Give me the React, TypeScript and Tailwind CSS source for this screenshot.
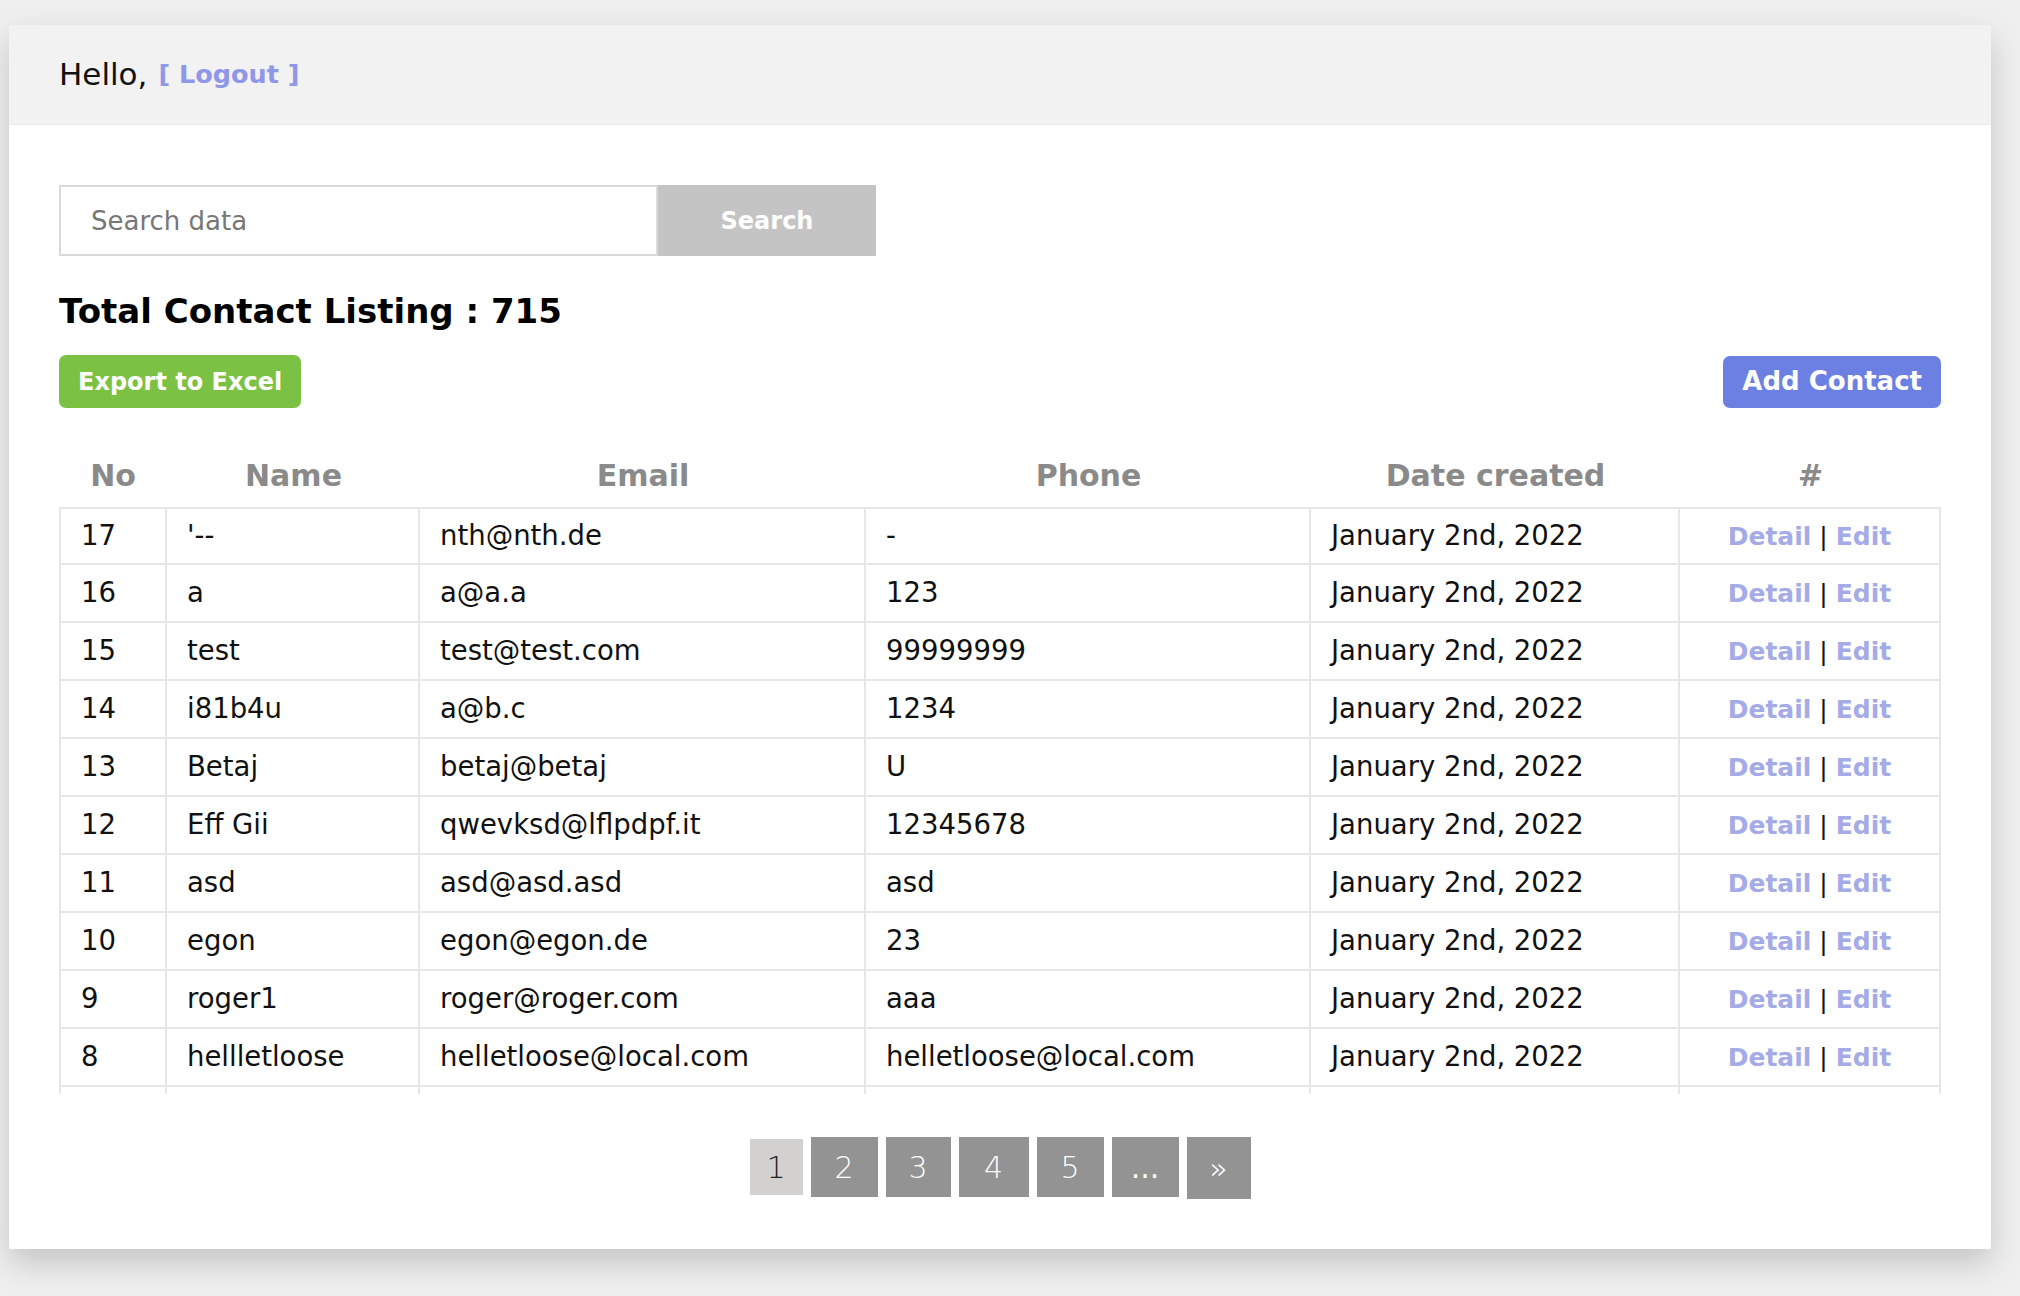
import React from 'react'

const contacts = [
  { no: 17, name: "'--", email: 'nth@nth.de', phone: '-' },
  { no: 16, name: 'a', email: 'a@a.a', phone: '123' },
  { no: 15, name: 'test', email: 'test@test.com', phone: '99999999' },
  { no: 14, name: 'i81b4u', email: 'a@b.c', phone: '1234' },
  { no: 13, name: 'Betaj', email: 'betaj@betaj', phone: 'U' },
  { no: 12, name: 'Eff Gii', email: 'qwevksd@lflpdpf.it', phone: '12345678' },
  { no: 11, name: 'asd', email: 'asd@asd.asd', phone: 'asd' },
  { no: 10, name: 'egon', email: 'egon@egon.de', phone: '23' },
  { no: 9, name: 'roger1', email: 'roger@roger.com', phone: 'aaa' },
  { no: 8, name: 'hellletloose', email: 'helletloose@local.com', phone: 'helletloose@local.com' },
]

const pages = [
  { label: '1', w: 'w-[53px]', active: true },
  { label: '2', w: 'w-[67px]' },
  { label: '3', w: 'w-[65px]' },
  { label: '4', w: 'w-[70px]' },
  { label: '5', w: 'w-[67px]' },
  { label: '...', w: 'w-[67px]' },
  { label: '»', w: 'w-[64px]', tall: true },
]

const cell = 'h-[58px] py-0 border-r-2 border-b-2 border-[#e6e6e6]'

export default function App() {
  return (
    <div className="min-h-[1296px] bg-[#efefef] pt-[25px] pl-[9px] font-['DejaVu_Sans',sans-serif] text-[#111]">
      <div className="w-[1982px] bg-white shadow-[0_14px_30px_rgba(0,0,0,0.18)]">
        {/* top bar */}
        <div className="h-[100px] bg-[#f2f2f2] px-[50px] flex items-center border-b border-[#e9e9e9]">
          <span className="text-[31px]">Hello,</span>
          <a href="#" className="ml-[11px] text-[25.5px] font-bold text-[#9097e8]">[ Logout ]</a>
        </div>

        <div className="px-[50px] pt-[60px] pb-[50px]">
          {/* search */}
          <div className="flex h-[71px]">
            <input
              placeholder="Search data"
              className="w-[599px] h-full border-2 border-[#d9d9d9] pl-[30px] text-[26px] text-[#333] placeholder:text-[#777] outline-none"
            />
            <button className="w-[218px] h-full bg-[#c4c4c4] text-white text-[24px] font-bold">Search</button>
          </div>

          <h1 className="mt-[35px] text-[34px] leading-[40px] font-bold text-black">Total Contact Listing : 715</h1>

          <div className="mt-[24px] flex items-center justify-between">
            <button className="h-[53px] px-[19px] rounded-[7px] bg-[#7bc144] text-white text-[24px] font-bold">Export to Excel</button>
            <button className="h-[52px] px-[19px] rounded-[7px] bg-[#6c7fe3] text-white text-[26px] font-bold">Add Contact</button>
          </div>

          {/* table */}
          <div className="mt-[36px] h-[650px] overflow-hidden">
            <table className="w-[1882px] table-fixed border-separate border-spacing-0">
              <colgroup>
                <col className="w-[108px]" />
                <col className="w-[253px]" />
                <col className="w-[446px]" />
                <col className="w-[445px]" />
                <col className="w-[369px]" />
                <col className="w-[261px]" />
              </colgroup>
              <thead>
                <tr className="h-[63px] text-[30px] font-bold text-[#8a8a8a]">
                  <th className="font-bold">No</th>
                  <th className="font-bold">Name</th>
                  <th className="font-bold">Email</th>
                  <th className="font-bold">Phone</th>
                  <th className="font-bold">Date created</th>
                  <th className="font-bold">#</th>
                </tr>
              </thead>
              <tbody className="text-[27.5px]">
                {contacts.map((c, i) => (
                  <tr key={c.no}>
                    {[String(c.no), c.name, c.email, c.phone, 'January 2nd, 2022'].map((v, j) => (
                      <td
                        key={j}
                        className={`${cell} px-[20px] whitespace-nowrap ${j === 0 ? 'border-l-2' : ''} ${
                          i === 0 ? 'border-t-2' : ''
                        }`}
                      >
                        {v}
                      </td>
                    ))}
                    <td className={`${cell} text-center ${i === 0 ? 'border-t-2' : ''}`}>
                      <a href="#" className="text-[25px] font-bold text-[#a4abe6]">Detail</a>
                      <span className="mx-[8px] text-[25px]">|</span>
                      <a href="#" className="text-[25px] font-bold text-[#a4abe6]">Edit</a>
                    </td>
                  </tr>
                ))}
                {/* next row, cut off by the scroll box */}
                <tr>
                  <td className={`${cell} border-l-2`} />
                  <td className={cell} />
                  <td className={cell} />
                  <td className={cell} />
                  <td className={cell} />
                  <td className={cell} />
                </tr>
              </tbody>
            </table>
          </div>

          {/* pagination */}
          <div className="mt-[43px] flex justify-center items-start gap-[8px]">
            {pages.map((p) => (
              <a
                key={p.label}
                href="#"
                className={`${p.w} flex items-center justify-center text-[30px] ${
                  p.label === '...' ? 'font-normal text-[24px]' : 'font-extralight'
                } ${
                  p.active
                    ? 'mt-[2px] h-[56px] bg-[#d3d0d0] text-[#222]'
                    : p.tall
                    ? 'h-[62px] bg-[#939393] text-white'
                    : 'h-[60px] bg-[#939393] text-white'
                }`}
              >
                {p.label}
              </a>
            ))}
          </div>
        </div>
      </div>
    </div>
  )
}
